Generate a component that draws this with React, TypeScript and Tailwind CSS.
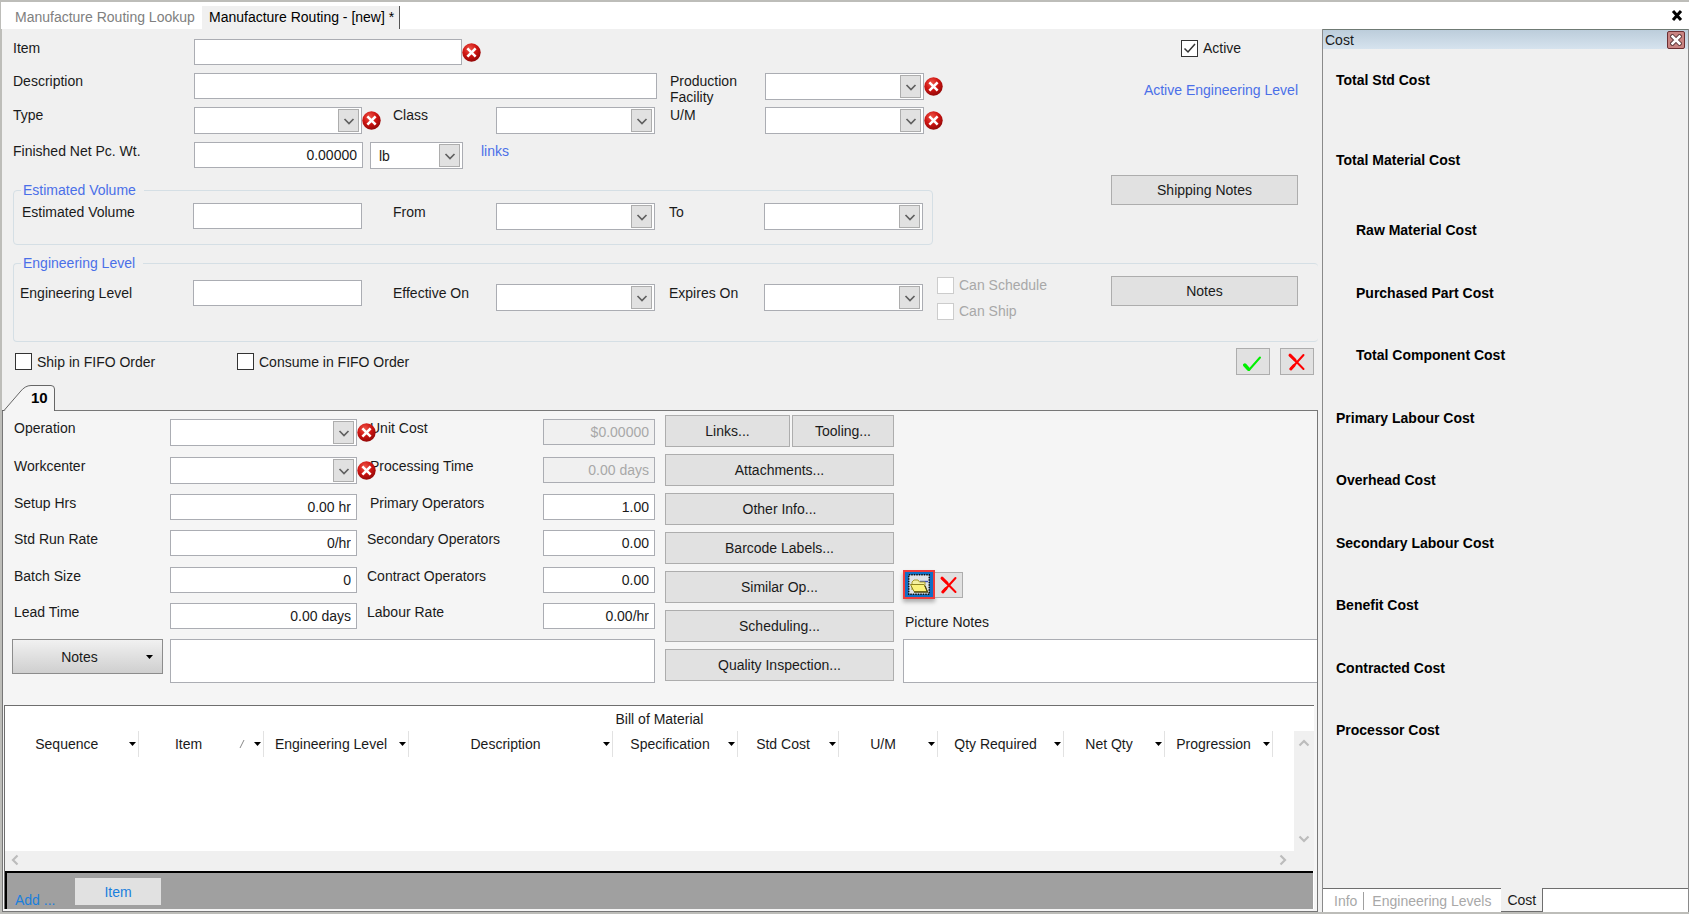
import React, { useId } from 'react';

const ErrorIcon: React.FC = () => (
  <svg viewBox="0 0 19 19" className="w-[19px] h-[19px] shrink-0" aria-label="Required">
    <defs>
      <radialGradient id="err" cx="0.4" cy="0.3" r="0.75">
        <stop offset="0" stopColor="#ee5548" />
        <stop offset="0.5" stopColor="#cf1512" />
        <stop offset="1" stopColor="#8c0606" />
      </radialGradient>
    </defs>
    <circle cx="9.5" cy="9.5" r="9.2" fill="url(#err)" />
    <path d="M6.3 6.3l6.4 6.4M12.7 6.3l-6.4 6.4" stroke="#fff" strokeWidth="2.6" strokeLinecap="square" />
  </svg>
);

const RedCross: React.FC = () => (
  <svg viewBox="0 0 20 20" className="w-5 h-5" fill="none" stroke="#ff0000" strokeLinecap="round">
    <path d="M3 3.2L16.5 17" strokeWidth="2" />
    <path d="M3 3.2L8 8" strokeWidth="3" />
    <path d="M16.5 3L3.8 17" strokeWidth="2" />
    <path d="M7 13.5L3.8 17" strokeWidth="3" />
  </svg>
);

const FolderIcon: React.FC = () => (
  <svg viewBox="0 0 22 21" className="w-[22px] h-[21px] shrink-0">
    <rect x="0.75" y="0.75" width="20.5" height="19.5" fill="#dfe3e6" stroke="#111" strokeWidth="1.5" strokeDasharray="1.5 1" />
    <path d="M12 7.500h8" stroke="#3c50b4" strokeWidth="1.4" />
    <path d="M4 16V8l2-2h4l1.500 2H17v3" fill="#f4f0a0" stroke="#a79a30" />
    <path d="M2.500 10.500h13.500l3.500 7H6z" fill="#fbf27c" stroke="#8f8420" />
    <path d="M6 18.200h13.500l-2.500-6.500" fill="none" stroke="#4d4712" strokeWidth="1.2" />
  </svg>
);

const Arrow: React.FC<{ d: string }> = ({ d }) => (
  <svg viewBox="0 0 12 12" className="w-3 h-3" fill="none" stroke="currentColor" strokeWidth="2.200">
    <path d={d} />
  </svg>
);

const Caret: React.FC = () => (
  <svg viewBox="0 0 7 4" className="w-[7px] h-1 shrink-0">
    <path d="M0 0h7L3.500 4z" fill="#000" />
  </svg>
);

interface FieldProps {
  id?: string;
  label?: string;
  value?: string;
  className?: string;
  disabled?: boolean;
}

const TextBox: React.FC<FieldProps> = ({ id, label, value = '', className = '', disabled }) => (
  <input
    id={id}
    aria-label={label}
    type="text"
    defaultValue={value}
    disabled={disabled}
    className={`h-[26px] min-w-0 shrink-0 border border-[#abadb3] px-[5px] text-right outline-none focus:border-[#0078d7] ${disabled ? 'bg-[#f0f0f0] text-[#a8a8a8]' : 'bg-white'} ${className}`}
  />
);

const Combo: React.FC<FieldProps & { required?: boolean }> = ({ id, label, value = '', className = '', required }) => (
  <div className={`relative h-[27px] shrink-0 ${className}`}>
    <select
      id={id}
      aria-label={label}
      defaultValue={value}
      className="appearance-none w-full h-full border border-[#abadb3] bg-white pl-2 outline-none focus:border-[#0078d7]"
    >
      <option value={value}>{value}</option>
    </select>
    <span className="absolute right-[3px] top-[2px] bottom-[2px] w-[21px] flex items-center justify-center border border-[#adadad] bg-[#e1e1e1] text-[#606060] pointer-events-none">
      <svg viewBox="0 0 12 8" className="w-3 h-2" fill="none" stroke="currentColor" strokeWidth="1.7">
        <path d="M1.500 2l4.500 4.500L10.500 2" />
      </svg>
    </span>
    {required && (
      <span className="absolute left-full top-1 z-10"><ErrorIcon /></span>
    )}
  </div>
);

const Check: React.FC<{ label: string; checked?: boolean; disabled?: boolean }> = ({ label, checked, disabled }) => {
  const id = useId();
  return (
    <div className="flex items-center gap-[5px]">
      <span className="relative flex">
        <input
          id={id}
          type="checkbox"
          defaultChecked={checked}
          disabled={disabled}
          className="peer appearance-none w-[17px] h-[17px] border border-[#333] bg-white disabled:border-[#ccc]"
        />
        <svg viewBox="0 0 17 17" className="absolute inset-0 hidden peer-checked:block pointer-events-none" fill="none" stroke="#333" strokeWidth="1.5">
          <path d="M3.500 8.500l3.500 3.500 7-8" />
        </svg>
      </span>
      <label htmlFor={id} className={disabled ? 'text-[#a8a8a8]' : ''}>{label}</label>
    </div>
  );
};

const Btn: React.FC<{ children: React.ReactNode; className?: string; label?: string }> = ({ children, className = '', label }) => (
  <button type="button" aria-label={label} className={`flex items-center justify-center border border-[#adadad] bg-[#e1e1e1] hover:bg-[#e5f1fb] ${className}`}>
    {children}
  </button>
);

const costRows = [
  { label: 'Total Std Cost', h: 'h-20' },
  { label: 'Total Material Cost', h: 'h-[70px]' },
  { label: 'Raw Material Cost', h: 'h-[63px]', indent: true },
  { label: 'Purchased Part Cost', h: 'h-[62px]', indent: true },
  { label: 'Total Component Cost', h: 'h-[63px]', indent: true },
  { label: 'Primary Labour Cost', h: 'h-[62px]' },
  { label: 'Overhead Cost', h: 'h-[63px]' },
  { label: 'Secondary Labour Cost', h: 'h-[62px]' },
  { label: 'Benefit Cost', h: 'h-[63px]' },
  { label: 'Contracted Cost', h: 'h-[62px]' },
  { label: 'Processor Cost', h: 'h-[63px]' },
];

const columns = [
  { label: 'Sequence', w: 'w-[133px]' },
  { label: 'Item', w: 'w-[125px]', sorted: true },
  { label: 'Engineering Level', w: 'w-[145px]' },
  { label: 'Description', w: 'w-[204px]' },
  { label: 'Specification', w: 'w-[125px]' },
  { label: 'Std Cost', w: 'w-[101px]' },
  { label: 'U/M', w: 'w-[99px]' },
  { label: 'Qty Required', w: 'w-[126px]' },
  { label: 'Net Qty', w: 'w-[101px]' },
  { label: 'Progression', w: 'w-[108px]' },
];

const operationRows = [
  { left: 'Operation', combo: true, right: 'Unit Cost', rightValue: '$0.00000', locked: true, pad: 'pl-[13px]' },
  { left: 'Workcenter', combo: true, right: 'Processing Time', rightValue: '0.00 days', locked: true, pad: 'pl-[13px]' },
  { left: 'Setup Hrs', leftValue: '0.00 hr', right: 'Primary Operators', rightValue: '1.00', pad: 'pl-[13px]' },
  { left: 'Std Run Rate', leftValue: '0/hr', right: 'Secondary Operators', rightValue: '0.00', pad: 'pl-[10px]' },
  { left: 'Batch Size', leftValue: '0', right: 'Contract Operators', rightValue: '0.00', pad: 'pl-[10px]' },
  { left: 'Lead Time', leftValue: '0.00 days', right: 'Labour Rate', rightValue: '0.00/hr', pad: 'pl-[10px]' },
];

const actionButtons = ['Attachments...', 'Other Info...', 'Barcode Labels...', 'Similar Op...', 'Scheduling...', 'Quality Inspection...'];

const RoutingHeader: React.FC = () => (
  <form className="shrink-0 mr-1">
    <div className="flex justify-between pl-[11px] pr-5 pt-[10px]">
      <div>
        <div className="flex flex-col gap-2">
          <div className="flex items-start">
            <label htmlFor="item" className="w-[181px]">Item</label>
            <TextBox id="item" className="w-[268px]" />
            <span className="pt-1"><ErrorIcon /></span>
          </div>
          <div className="flex items-start h-[26px]">
            <label htmlFor="description" className="w-[181px] leading-4">Description</label>
            <TextBox id="description" className="w-[463px]" />
            <label htmlFor="facility" className="w-[108px] pl-[13px] leading-4">Production Facility</label>
            <Combo id="facility" className="w-[159px]" required />
          </div>
          <div className="flex items-start">
            <label htmlFor="type" className="w-[181px] leading-4">Type</label>
            <Combo id="type" className="w-[168px]" required />
            <label htmlFor="class" className="w-[134px] pl-[31px] leading-4">Class</label>
            <Combo id="class" className="w-[159px]" />
            <label htmlFor="um" className="w-[110px] pl-[15px] leading-4">U/M</label>
            <Combo id="um" className="w-[159px]" required />
          </div>
          <div className="flex items-start">
            <label htmlFor="weight" className="w-[181px]">Finished Net Pc. Wt.</label>
            <TextBox id="weight" value="0.00000" className="w-[169px]" />
            <Combo label="Weight unit" value="lb" className="ml-[7px] w-[93px]" />
            <a href="#links" className="ml-[18px] text-[#4a6fe8]">links</a>
          </div>
        </div>

        <fieldset className="mt-3 w-[920px] border border-[#d5dfe5] rounded-[4px] pb-[14px]">
          <legend className="ml-[7px] pl-[2px] pr-2 text-[#4a6fe8]">Estimated Volume</legend>
          <div className="flex items-start pt-1 pl-2">
            <label htmlFor="volume" className="w-[171px]">Estimated Volume</label>
            <TextBox id="volume" className="w-[169px]" />
            <label htmlFor="from" className="w-[134px] pl-[31px]">From</label>
            <Combo id="from" className="w-[159px]" />
            <label htmlFor="to" className="w-[109px] pl-[14px]">To</label>
            <Combo id="to" className="w-[159px]" />
          </div>
        </fieldset>
      </div>

      <div className="w-[187px] flex flex-col">
        <div className="pl-[70px]"><Check label="Active" checked /></div>
        <a href="#level" className="mt-6 self-end whitespace-nowrap text-[#4a6fe8]">Active Engineering Level</a>
        <Btn className="mt-[76px] w-full h-[30px]">Shipping Notes</Btn>
      </div>
    </div>

    <fieldset className="mt-[9px] ml-[11px] border border-r-0 border-[#d5dfe5] rounded-[4px] pb-[21px]">
      <legend className="ml-[7px] pl-[2px] pr-2 text-[#4a6fe8]">Engineering Level</legend>
      <div className="flex items-start pt-1 pl-[6px]">
        <label htmlFor="level" className="w-[173px] mt-2">Engineering Level</label>
        <TextBox id="level" className="w-[169px] mt-1" />
        <label htmlFor="effective" className="w-[134px] pl-[31px] mt-2">Effective On</label>
        <Combo id="effective" className="w-[159px] mt-2" />
        <label htmlFor="expires" className="w-[109px] pl-[14px] mt-2">Expires On</label>
        <Combo id="expires" className="w-[159px] mt-2" />
        <div className="ml-[14px] flex flex-col gap-2">
          <Check label="Can Schedule" disabled />
          <Check label="Can Ship" disabled />
        </div>
        <Btn className="ml-auto mr-5 w-[187px] h-[30px]">Notes</Btn>
      </div>
    </fieldset>

    <div className="mt-[6px] pl-[13px] pr-1 flex items-center">
      <div className="w-[222px]"><Check label="Ship in FIFO Order" /></div>
      <Check label="Consume in FIFO Order" />
      <div className="ml-auto flex gap-[10px]">
        <Btn label="Accept" className="w-[34px] h-[27px]">
          <svg viewBox="0 0 20 20" className="w-5 h-5" fill="none" stroke="#00f000" strokeLinecap="round" strokeLinejoin="round">
            <path d="M1.500 13L6 18 17 5.500" strokeWidth="2" />
            <path d="M1.800 13L5.500 17.200" strokeWidth="3.500" />
          </svg>
        </Btn>
        <Btn label="Cancel" className="w-[34px] h-[27px]"><RedCross /></Btn>
      </div>
    </div>
  </form>
);

const OperationPanel: React.FC = () => (
  <div className="flex items-stretch pl-[9px] pt-2">
    <div className="shrink-0">
      <div className="grid grid-cols-[158px_187px_186px_112px] grid-rows-[38px_37px_36px_37px_36px_36px] items-start">
        {operationRows.map(row => (
          <React.Fragment key={row.left}>
            <label htmlFor={row.left} className="pl-[2px]">{row.left}</label>
            {row.combo ? (
              <Combo id={row.left} className="w-full" required />
            ) : (
              <TextBox id={row.left} value={row.leftValue} className="w-full" />
            )}
            <label htmlFor={row.right} className={row.pad}>{row.right}</label>
            <TextBox id={row.right} value={row.rightValue} disabled={row.locked} className="w-full" />
          </React.Fragment>
        ))}
      </div>
      <div className="flex items-start">
        <button type="button" className="w-[151px] h-[35px] flex items-center border border-[#8c8c8c] bg-gradient-to-b from-[#f1f1f1] to-[#cfcfcf] pr-[9px]">
          <span className="flex-1 text-center">Notes</span>
          <Caret />
        </button>
        <textarea aria-label="Operation notes" className="ml-[7px] w-[485px] h-11 resize-none border border-[#abadb3] bg-white p-1 outline-none" />
      </div>
    </div>

    <div className="ml-[10px] -mt-1 w-[229px] shrink-0 flex flex-col gap-[7px]">
      <div className="flex gap-[2px]">
        <Btn className="flex-1 h-8">Links...</Btn>
        <Btn className="w-[102px] h-8">Tooling...</Btn>
      </div>
      {actionButtons.map(text => <Btn key={text} className="h-8">{text}</Btn>)}
    </div>

    <div className="ml-[9px] flex-1 min-w-0 flex flex-col justify-end">
      <div className="flex items-center">
        <button type="button" aria-label="Open picture" className="w-8 h-[29px] flex items-center justify-center border-2 border-[#f03c3c] bg-[#0f6fc5] shadow-[0_3px_4px_rgba(0,0,0,0.3)]">
          <FolderIcon />
        </button>
        <Btn label="Remove picture" className="w-7 h-[26px] border-l-0"><RedCross /></Btn>
      </div>
      <label htmlFor="picture-notes" className="mt-[14px] pl-[2px]">Picture Notes</label>
      <textarea id="picture-notes" className="mt-2 w-full h-11 resize-none border border-r-0 border-[#abadb3] bg-white p-1 outline-none" />
    </div>
  </div>
);

const BillOfMaterial: React.FC = () => (
  <section className="mt-[22px] ml-px mr-[3px] mb-[2px] flex-1 flex flex-col border-t border-l border-[#6e6e6e] bg-white">
    <h2 id="bom" className="h-[25px] pt-1 text-center">Bill of Material</h2>
    <div className="flex-1 flex min-h-[118px]">
      <div className="flex-1 min-w-0 overflow-hidden">
        <table aria-labelledby="bom" className="table-fixed w-[1267px]">
          <thead>
            <tr>
              {columns.map(col => (
                <th key={col.label} className={`${col.w} h-[26px] p-0 border-r border-[#e2e2e2] font-normal`}>
                  <div className="flex items-center pr-[2px]">
                    <span className="flex-1 text-center whitespace-nowrap">{col.label}</span>
                    {col.sorted && (
                      <svg viewBox="0 0 6 8" className="w-[6px] h-2 mr-[9px]" stroke="#888"><path d="M1 8L5 0" /></svg>
                    )}
                    <Caret />
                  </div>
                </th>
              ))}
            </tr>
          </thead>
          <tbody />
        </table>
      </div>
      <div className="w-5 flex flex-col justify-between items-center bg-[#f0f0f0] text-[#bcbcbc] py-[6px]">
        <button type="button" aria-label="Scroll up"><Arrow d="M1.500 8.500L6 4l4.500 4.500" /></button>
        <button type="button" aria-label="Scroll down"><Arrow d="M1.500 3.500L6 8l4.500-4.500" /></button>
      </div>
    </div>
    <div className="h-5 pb-[2px] flex items-center justify-between bg-[#f0f0f0] text-[#bcbcbc] pl-1 pr-[25px]">
      <button type="button" aria-label="Scroll left"><Arrow d="M8.500 1.500L4 6l4.500 4.500" /></button>
      <button type="button" aria-label="Scroll right"><Arrow d="M3.500 1.500L8 6l-4.500 4.500" /></button>
    </div>
    <div className="h-[38px] mr-px flex border-t-2 border-l-2 border-black bg-[#a0a0a0] text-[#1a7fdd] pl-2 pt-[5px]">
      <span className="w-[60px] self-end">Add ...</span>
      <button type="button" className="w-[86px] h-[27px] bg-[#e1e1e1]">Item</button>
    </div>
  </section>
);

const CostPanel: React.FC = () => (
  <aside className="w-[367px] shrink-0 flex flex-col border-l border-r border-[#8a8a8a]">
    <header className="h-5 shrink-0 flex items-center justify-between border-t border-[#6f7a74] bg-gradient-to-b from-[#bccddb] to-[#d6e3ee] pl-[2px] pr-[3px]">
      <h2>Cost</h2>
      <button type="button" aria-label="Close cost panel" className="w-[18px] h-[18px] flex items-center justify-center border border-[#6b2f33] rounded-[2px] bg-[#c98482]">
        <svg viewBox="0 0 12 12" className="w-3 h-3 shrink-0" fill="none" strokeLinecap="square">
          <path d="M2.500 2.500l7 7M9.500 2.500l-7 7" stroke="#5e3a3c" strokeWidth="4.500" />
          <path d="M2.500 2.500l7 7M9.500 2.500l-7 7" stroke="#fff" strokeWidth="2.500" />
        </svg>
      </button>
    </header>
    <ul className="flex-1 pt-[22px] pl-[13px] font-bold text-black">
      {costRows.map(row => (
        <li key={row.label} className={`${row.h} ${row.indent ? 'pl-5' : ''}`}>{row.label}</li>
      ))}
    </ul>
    <nav className="h-6 shrink-0 flex text-[#a8a8a8]">
      <div className="flex items-center bg-white border-t border-[#6e6e6e] pl-[11px] pr-[10px]">
        <button type="button" className="pr-[6px]">Info</button>
        <button type="button" className="border-l border-[#a0a0a0] pl-2">Engineering Levels</button>
      </div>
      <button type="button" className="px-[6px] border-r border-b border-[#6e6e6e] text-[#1a1a1a]">Cost</button>
      <div className="flex-1 bg-white border-t border-[#6e6e6e]" />
    </nav>
  </aside>
);

export default function App() {
  return (
    <div className="min-h-screen flex flex-col bg-[#f0f0f0] border-t-2 border-b-2 border-[#bdbdb9] font-['Liberation_Sans',Arial,sans-serif] text-[14px] leading-[18px] text-[#1a1a1a]">
      <nav className="h-[27px] shrink-0 flex items-end border-l border-[#bdbdb9] bg-white pr-[6px]">
        <button type="button" className="h-[23px] w-[201px] pl-[14px] pb-[2px] text-left text-[#808080]">Manufacture Routing Lookup</button>
        <button type="button" className="h-[23px] w-[198px] pl-[7px] pb-[2px] text-left border-r border-[#555] bg-[#f0f0f0] text-black">Manufacture Routing - [new] *</button>
        <button type="button" aria-label="Close tab" className="ml-auto self-center">
          <svg viewBox="0 0 12 11" className="w-3 h-[11px]" stroke="#000" strokeWidth="3">
            <path d="M2 1l8 9M10 1l-8 9" />
          </svg>
        </button>
      </nav>

      <div className="flex-1 flex">
        <main className="flex-1 min-w-0 flex flex-col border-l-2 border-[#bdbdb9]">
          <RoutingHeader />
          <div className="relative z-10 mt-[10px] h-[26px] w-[54px] -mb-px shrink-0">
            <svg viewBox="0 0 54 26" className="absolute inset-0 w-[54px] h-[26px]">
              <path d="M0 26L3 25.500 18 7Q23 0.500 29 0.500H49Q52.500 0.500 52.500 4V26z" fill="#f5f5f5" />
              <path d="M0 25.500H2L18 7Q23 0.500 29 0.500H49Q52.500 0.500 52.500 4V26" fill="none" stroke="#666" />
            </svg>
            <button type="button" className="relative w-full h-full pl-[29px] text-left text-[15px] font-bold text-black">10</button>
          </div>
          <section className="flex-1 flex flex-col mr-1 border border-[#777] bg-[#f5f5f5]">
            <OperationPanel />
            <BillOfMaterial />
          </section>
        </main>
        <CostPanel />
      </div>
    </div>
  );
}
